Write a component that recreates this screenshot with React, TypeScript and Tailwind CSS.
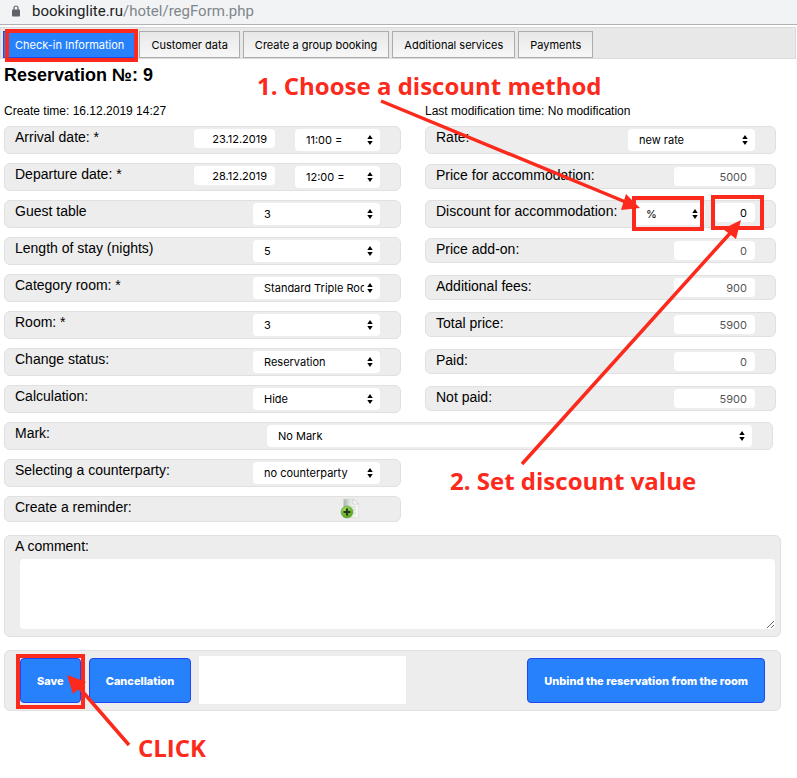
import { useId, useState } from "react"
import type { ReactNode } from "react"

const TABS = [
  "Check-in Information",
  "Customer data",
  "Create a group booking",
  "Additional services",
  "Payments",
]

const ROW = "flex items-start justify-between rounded-md border border-[#e0e0e0] bg-[#ededed] pl-[10px] pr-5"
const FIELD = "rounded bg-white font-['Inter',sans-serif] text-[11px] outline-none"
const ACTION =
  "mt-[2px] h-[45px] rounded border border-[#1f47f5] bg-[#2781fa] px-4 pt-px font-['Inter',sans-serif] text-[11px] font-extrabold text-white"

interface RowProps {
  label: string
  htmlFor?: string
  className?: string
  children: ReactNode
}

function Row({ label, htmlFor, className = "h-7", children }: RowProps) {
  return (
    <div className={`${ROW} ${className}`}>
      <label htmlFor={htmlFor} className="whitespace-nowrap text-sm leading-5">
        {label}
      </label>
      <div className="flex items-start pt-[2px]">{children}</div>
    </div>
  )
}

interface SelectProps {
  id?: string
  label?: string
  options: string[]
  className?: string
}

function Select({ id, label, options, className = "w-[127px]" }: SelectProps) {
  return (
    <span className={`relative block ${className}`}>
      <select
        id={id}
        aria-label={label}
        defaultValue={options[0]}
        className={`${FIELD} block h-[22px] w-full appearance-none pl-[11px] pr-4 text-black`}
      >
        {options.map((option) => (
          <option key={option}>{option}</option>
        ))}
      </select>
      <svg viewBox="0 0 6 10" className="pointer-events-none absolute right-[7px] top-[6px] h-[10px] w-[6px]">
        <path d="M3 0 5.7 4H.3zM3 10 .3 6h5.4z" />
      </svg>
    </span>
  )
}

function SelectRow({ label, options }: { label: string; options: string[] }) {
  const id = useId()
  return (
    <Row label={label} htmlFor={id}>
      <Select id={id} options={options} />
    </Row>
  )
}

function DateRow({ label, date, time }: { label: string; date: string; time: string }) {
  const id = useId()
  return (
    <Row label={label} htmlFor={id}>
      <input id={id} defaultValue={date} className={`${FIELD} mr-5 h-[19px] w-[81px] pr-2 text-right`} />
      <Select label={`${label} time`} options={[time]} className="w-[85px]" />
    </Row>
  )
}

function AmountRow({ label, value }: { label: string; value: string }) {
  const id = useId()
  return (
    <Row label={label} htmlFor={id} className="mb-[2px] mt-px h-[25px]">
      <input
        id={id}
        readOnly
        value={value}
        className={`${FIELD} h-[19px] w-[81px] pr-2 text-right text-[#555]`}
      />
    </Row>
  )
}

function AddNoteIcon() {
  return (
    <svg viewBox="0 0 20 22" className="h-[22px] w-5">
      <defs>
        <linearGradient id="sheet" x1="0" y1="0" x2="1" y2="0">
          <stop offset="0" stopColor="#a9b3ac" />
          <stop offset=".45" stopColor="#e3e8e3" />
          <stop offset="1" stopColor="#f8faf8" />
        </linearGradient>
        <radialGradient id="plus" cx=".4" cy=".3" r=".8">
          <stop offset="0" stopColor="#a5dd62" />
          <stop offset="1" stopColor="#4c9a17" />
        </radialGradient>
      </defs>
      <path d="M3.500 2H13l5.500 5v14h-15z" fill="url(#sheet)" stroke="#d3d9d4" strokeWidth=".6" />
      <path d="M13 2v5h5.500z" fill="#fff" stroke="#b4bcb6" strokeWidth=".6" />
      <path d="M11 10h5M13 13h3M13 16h3" stroke="#ccd4cd" strokeWidth=".8" />
      <circle cx="7" cy="15" r="6" fill="url(#plus)" stroke="#6aa83f" strokeWidth=".6" />
      <path d="M7 11.5v7M3.500 15h7" stroke="#25391a" strokeWidth="2.200" />
    </svg>
  )
}

function Annotations() {
  return (
    <div className="pointer-events-none absolute inset-0 whitespace-nowrap font-['Open_Sans',sans-serif] text-2xl font-bold text-[#fb2a1c]">
      <svg width="797" height="778" viewBox="0 0 797 778" fill="none" stroke="#fb2a1c" className="absolute left-0 top-0">
        <g strokeWidth="4">
          <rect x="7" y="31" width="129" height="29" />
          <rect x="634" y="198" width="68" height="31" />
          <rect x="713" y="197" width="49" height="31" />
          <rect x="18" y="656" width="65" height="51" />
        </g>
        <path d="M381 101 628 203M522 464 733 230M129 745 76 684" strokeWidth="3.500" />
        <path
          d="M640 208 626 194 621 210zM741 220 723 229 736 239zM67 675 86 682 73 694z"
          fill="#fb2a1c"
          stroke="none"
        />
      </svg>
      <span className="absolute left-[257px] top-[70px]">1. Choose a discount method</span>
      <span className="absolute left-[450px] top-[465px]">2. Set discount value</span>
      <span className="absolute left-[138px] top-[732px]">CLICK</span>
    </div>
  )
}

export default function App() {
  const [activeTab, setActiveTab] = useState(0)

  return (
    <div className="relative min-h-screen bg-white pb-16 font-['Liberation_Sans',Arial,sans-serif] text-black">
      <header className="flex h-[25px] items-center border-b border-[#b2b2b2] bg-[#f1f3f4] pb-[2px] pl-3 font-['Roboto',sans-serif] text-[15px] leading-none">
        <svg viewBox="0 0 8 12" className="mr-3 h-3 w-2">
          <rect y="4.500" width="8" height="7" rx="1" fill="#5f6368" />
          <path d="M2 5V3a2 2 0 0 1 4 0v2" fill="none" stroke="#5f6368" strokeWidth="1.200" />
        </svg>
        <span className="text-[#202124]">bookinglite.ru</span>
        <span className="text-[#80868b]">/hotel/regForm.php</span>
      </header>

      <nav className="mr-px mt-[2px] flex gap-[3px] border border-[#dadada] bg-[#e8e8e8] pl-[2px] pt-[3px]">
        {TABS.map((tab, index) => (
          <button
            key={tab}
            type="button"
            onClick={() => setActiveTab(index)}
            className={`h-[27px] whitespace-nowrap border px-[11px] pt-px font-['Inter',sans-serif] text-[11px] ${
              index === activeTab
                ? "border-[#1f47f5] bg-[#2781fa] text-white"
                : "border-[#acacac] bg-linear-to-b from-[#e8e8e8] to-[#f7f7f7] text-black"
            }`}
          >
            {tab}
          </button>
        ))}
      </nav>

      <main className="pl-1 pr-4">
        <h1 className="mt-1 text-lg font-bold leading-6">Reservation №: 9</h1>

        <div className="mr-[5px] mt-4 grid grid-cols-[397fr_351fr] gap-x-6">
          <p className="mb-[7px] text-xs">Create time: 16.12.2019 14:27</p>
          <p className="mb-[7px] text-xs">Last modification time: No modification</p>

          <div className="flex min-w-0 flex-col gap-[9px]">
            <DateRow label="Arrival date: *" date="23.12.2019" time="11:00 =" />
            <DateRow label="Departure date: *" date="28.12.2019" time="12:00 =" />
            <SelectRow label="Guest table" options={["3", "1", "2"]} />
            <SelectRow label="Length of stay (nights)" options={["5", "1", "2", "3", "4"]} />
            <SelectRow label="Category room: *" options={["Standard Triple Room"]} />
            <SelectRow label="Room: *" options={["3"]} />
            <SelectRow label="Change status:" options={["Reservation"]} />
            <SelectRow label="Calculation:" options={["Hide", "Show"]} />
          </div>

          <div className="flex min-w-0 flex-col gap-[9px]">
            <SelectRow label="Rate:" options={["new rate"]} />
            <AmountRow label="Price for accommodation:" value="5000" />
            <Row label="Discount for accommodation:" htmlFor="discount">
              <Select label="Discount method" options={["%"]} className="mr-[10px] w-[70px]" />
              <input
                id="discount"
                defaultValue="0"
                className={`${FIELD} h-[19px] w-10 pr-2 text-right`}
              />
            </Row>
            <AmountRow label="Price add-on:" value="0" />
            <AmountRow label="Additional fees:" value="900" />
            <AmountRow label="Total price:" value="5900" />
            <AmountRow label="Paid:" value="0" />
            <AmountRow label="Not paid:" value="5900" />
          </div>

          <div className="col-span-2 mr-[3px] mt-[9px]">
            <div className={`${ROW} h-7`}>
              <label htmlFor="mark" className="w-[252px] shrink-0 text-sm leading-5">
                Mark:
              </label>
              <div className="grow pt-[2px]">
                <Select id="mark" options={["No Mark"]} className="w-full" />
              </div>
            </div>
          </div>

          <div className="mt-[9px] flex min-w-0 flex-col gap-[9px]">
            <SelectRow label="Selecting a counterparty:" options={["no counterparty"]} />
            <div className={`${ROW} h-[26px]`}>
              <label htmlFor="reminder" className="text-sm leading-5">
                Create a reminder:
              </label>
              <button id="reminder" type="button" aria-label="Create a reminder" className="mr-5">
                <AddNoteIcon />
              </button>
            </div>
          </div>
        </div>

        <section className="mt-[13px] h-[102px] rounded-md border border-[#e0e0e0] bg-[#ededed] pl-[15px] pr-[5px]">
          <label htmlFor="comment" className="-ml-[5px] block text-sm leading-5">
            A comment:
          </label>
          <textarea
            id="comment"
            className={`${FIELD} mt-[3px] block h-[70px] w-full resize p-1`}
          />
        </section>

        <section className="mt-[13px] flex items-start gap-2 rounded-md border border-[#e0e0e0] bg-[#ededed] px-[15px] pb-[6px] pt-[5px]">
          <button type="button" className={ACTION}>
            Save
          </button>
          <button type="button" className={ACTION}>
            Cancellation
          </button>
          <div className="h-12 w-[207px] bg-white" />
          <button type="button" className={`${ACTION} ml-auto`}>
            Unbind the reservation from the room
          </button>
        </section>
      </main>

      <Annotations />
    </div>
  )
}
